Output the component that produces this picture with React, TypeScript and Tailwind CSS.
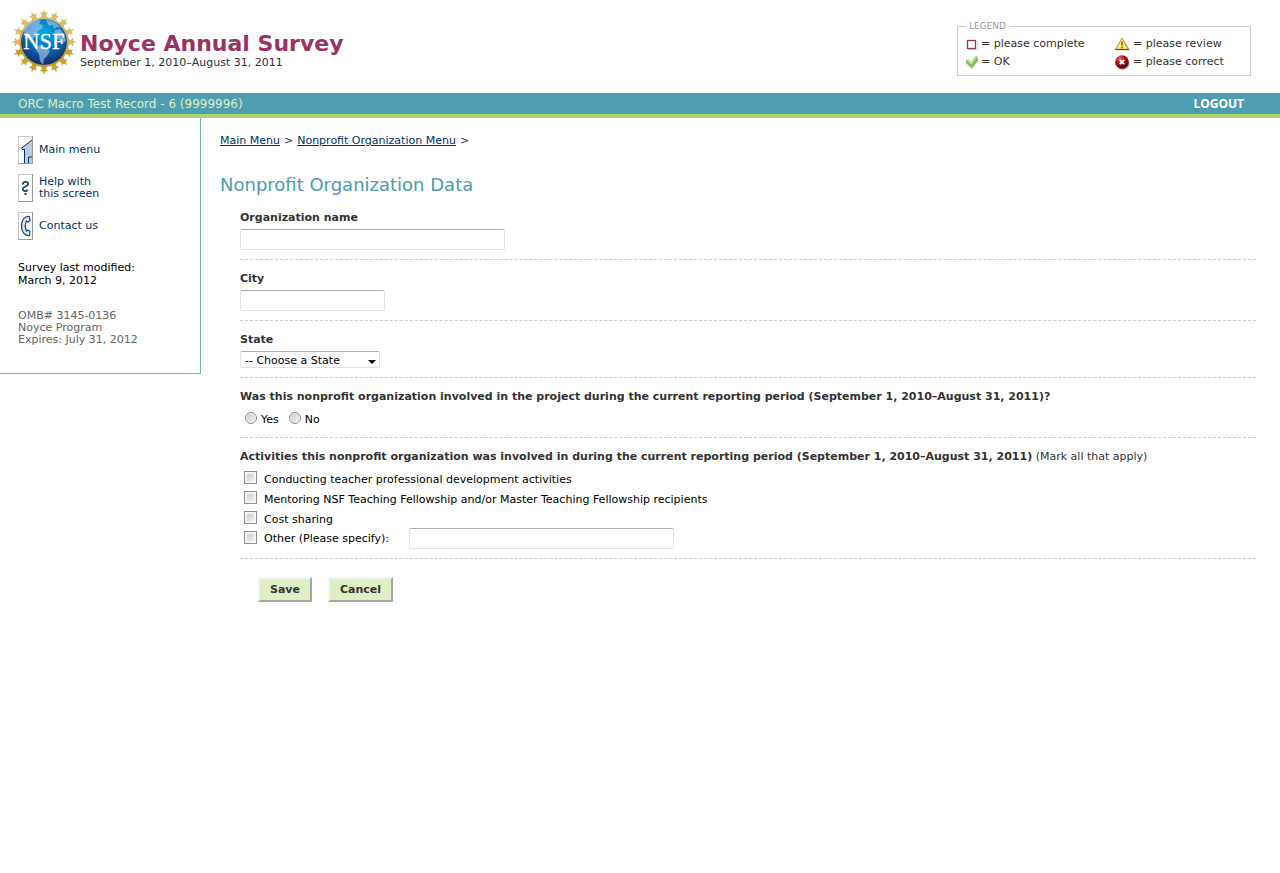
import type { ReactNode } from 'react';

const RAYS = Array.from({ length: 16 }, (_, i) => i * 22.5);

const ACTIVITIES = [
  'Conducting teacher professional development activities',
  'Mentoring NSF Teaching Fellowship and/or Master Teaching Fellowship recipients',
  'Cost sharing',
];

const STATES = ['California', 'Maryland', 'New York', 'Texas', 'Virginia'];

const boxClass =
  'size-[13px] shrink-0 appearance-none border border-[#8e8f8f] bg-linear-to-br from-[#c4c9d2] to-[#f6f6f6] shadow-[inset_0_0_0_2px_#f4f4f4] checked:from-[#4f9db0] checked:to-[#4f9db0]';
const radioClass =
  'size-3 shrink-0 appearance-none rounded-full border border-[#8e8f8f] bg-linear-to-br from-[#c4c9d2] to-[#f6f6f6] shadow-[inset_0_0_0_1px_#f4f4f4] checked:from-[#4f9db0] checked:to-[#4f9db0]';
const inputClass =
  'h-[21px] rounded-[2px] border border-[#e2e3ea] border-t-[#abadb3] bg-white px-1 text-[11px] text-black';
const buttonClass =
  'h-[25px] border-2 border-t-[#f4f4f4] border-l-[#f4f4f4] border-r-[#a5a5a5] border-b-[#a5a5a5] bg-[#dfefc5] px-2.5 pt-px text-[11px] font-bold';

function NsfLogo() {
  return (
    <svg viewBox="0 0 66 66" className="size-[66px] shrink-0" role="img" aria-label="NSF">
      <defs>
        <radialGradient id="globe" cx="50%" cy="30%" r="70%">
          <stop offset="0" stopColor="#00aeea" />
          <stop offset="0.5" stopColor="#0872bb" />
          <stop offset="1" stopColor="#142a63" />
        </radialGradient>
        <linearGradient id="gold" gradientUnits="userSpaceOnUse" x1="0" y1="0" x2="0" y2="66">
          <stop offset="0" stopColor="#dfc27a" />
          <stop offset="1" stopColor="#c19416" />
        </linearGradient>
      </defs>
      {RAYS.map((angle) => (
        <path
          key={angle}
          fill={angle > 90 && angle < 270 ? '#c9a02c' : '#dbbc6c'}
          transform={`rotate(${angle} 33 33)`}
          d="M33 0 34.1 3.6 37.2 3.8 35.2 6 35.8 8 39 10.5H27L30.2 8 30.8 6 28.8 3.8 31.9 3.6Z"
        />
      ))}
      <circle cx="33" cy="33" r="24" fill="none" stroke="url(#gold)" strokeWidth="1.5" />
      <circle cx="33" cy="33" r="23" fill="url(#globe)" />
      <g fill="#a9c5e8" opacity="0.65">
        <path d="M13 22c2-6 7-10 13-11l4 1-2 3 4 1-1 4-4 2-1 4-3 2-2 4-3-3-4 1z" />
        <path d="M35 11c6 0 11 3 15 8l-4-1-3 2-1-4-4 1z" />
        <path d="M26 37l5-1 5 3 3 3-3 5-3 3-1 6-3-4-1-7-3-4z" />
        <path d="M44 21l5-1 4 5 2 7-4 3-3-4-5-3z" />
      </g>
      <text
        x="33"
        y="40"
        textAnchor="middle"
        fontFamily="Liberation Serif, serif"
        fontSize="22.5"
        fill="#fff"
        stroke="#fff"
        strokeWidth="0.3"
      >
        NSF
      </text>
    </svg>
  );
}

function CompleteIcon() {
  return (
    <svg viewBox="0 0 12 14" className="h-[14px] w-3" aria-hidden="true">
      <path d="M2 12.5h9.5V4" fill="none" stroke="#ddd" />
      <rect x="1.5" y="3.5" width="8" height="8" fill="#fff" stroke="#993366" strokeWidth="1.3" />
    </svg>
  );
}

function OkIcon() {
  return (
    <svg viewBox="0 0 12 14" className="h-[14px] w-3" aria-hidden="true">
      <path d="M1 8 6 14 12 6V3L6 10 3 7z" fill="#b5b5b5" />
      <path d="M0 5 3 4.5 5 7 9.5 1 11.5 1.5V6L6 12.5 4 12 0 8z" fill="#86bd54" />
      <path d="M0 5 3 4.5 5 7 9.5 1 11 2 5.5 9.5z" fill="#c1e69c" />
    </svg>
  );
}

function ReviewIcon() {
  return (
    <svg viewBox="0 0 15 14" className="h-[14px] w-[15px]" aria-hidden="true">
      <path d="M2 13.5H15L8.5 2z" fill="#c4c4c4" />
      <path d="M7 1 .7 12.3H13.3z" fill="#fff06c" stroke="#dc8b3e" />
      <path d="M0 12.5h14" stroke="#c2201a" />
      <path d="M7 4.5v4M7 9.7v1.5" stroke="#443c14" strokeWidth="1.2" />
    </svg>
  );
}

function CorrectIcon() {
  return (
    <svg viewBox="0 0 15 15" className="size-[15px]" aria-hidden="true">
      <defs>
        <radialGradient id="ball" cx="35%" cy="25%" r="75%">
          <stop offset="0" stopColor="#e66a6a" />
          <stop offset="0.45" stopColor="#b80d12" />
          <stop offset="1" stopColor="#420608" />
        </radialGradient>
      </defs>
      <ellipse cx="8" cy="9" rx="6.5" ry="6" fill="#bbb" />
      <circle cx="7" cy="7" r="6.8" fill="url(#ball)" />
      <path d="M4.8 4.8 9.2 9.2M9.2 4.8 4.8 9.2" stroke="#fff" strokeWidth="1.9" />
    </svg>
  );
}

function NavIcon({ children }: { children: ReactNode }) {
  return (
    <svg viewBox="0 0 15 28" className="h-7 w-[15px] shrink-0" fill="none" aria-hidden="true">
      <path d="M.5 28V.5H15" stroke="#c8c8c8" />
      {children}
      <path d="M14.5 0V27.5H0" stroke="#999" />
    </svg>
  );
}

function LegendItem({ icon, children }: { icon: ReactNode; children: ReactNode }) {
  return (
    <li className="flex h-[18px] items-center gap-[3px]">
      {icon}
      <span>= {children}</span>
    </li>
  );
}

function NavLink({ icon, children }: { icon: ReactNode; children: ReactNode }) {
  return (
    <a href="#" className="flex items-center gap-1.5 text-[11px] leading-3 text-[#003366]">
      <NavIcon>{icon}</NavIcon>
      <span>{children}</span>
    </a>
  );
}

function Section({ children }: { children: ReactNode }) {
  return (
    <div className="flex flex-col items-start gap-[3px] border-b border-dashed border-[#ccc] pt-[11px] pb-[9px]">
      {children}
    </div>
  );
}

export default function App() {
  return (
    <div className="min-h-screen bg-white font-['Verdana','DejaVu_Sans',sans-serif] text-[11px] leading-4 text-[#333]">
      <header className="flex h-[93px] items-start justify-between pr-[29px] pl-[11px]">
        <div className="flex gap-[3px] pt-[9px]">
          <NsfLogo />
          <div className="pt-[22px]">
            <h1 className="text-[22px] leading-[26px] font-bold text-[#993366]">Noyce Annual Survey</h1>
            <p className="leading-3">September 1, 2010–August 31, 2011</p>
          </div>
        </div>
        <fieldset className="mt-[22px] h-[54px] w-[294px] border border-[#ccc] px-2">
          <legend className="px-[3px] text-[9px] leading-[9px] text-[#999]">LEGEND</legend>
          <ul className="grid grid-cols-[149px_1fr] pt-1">
            <LegendItem icon={<CompleteIcon />}>please complete</LegendItem>
            <LegendItem icon={<ReviewIcon />}>please review</LegendItem>
            <LegendItem icon={<OkIcon />}>OK</LegendItem>
            <LegendItem icon={<CorrectIcon />}>please correct</LegendItem>
          </ul>
        </fieldset>
      </header>

      <div className="flex h-[25px] items-center justify-between border-b-4 border-[#a9d56c] bg-[#4f9db0] pr-9 pl-[18px] text-[12px]">
        <span className="text-[#dfefc5]">ORC Macro Test Record - 6 (9999996)</span>
        <a href="#" className="font-['Open_Sans',sans-serif] font-bold text-white">
          LOGOUT
        </a>
      </div>

      <div className="flex items-start">
        <aside className="w-[201px] shrink-0 border-r border-b border-[#76b5b5] pt-[18px] pb-[27px] pl-[18px]">
          <nav className="flex flex-col gap-2.5">
            <NavLink
              icon={
                <>
                  <path d="M3 12 14 4V27H7V14L3 13z" fill="#bccada" />
                  <path d="M3 12.5 14 4M4 13.5h3M6.5 13v14M10.5 27v-6H14" stroke="#003366" />
                </>
              }
            >
              Main menu
            </NavLink>
            <NavLink
              icon={
                <>
                  <path
                    d="M4.8 10.5c0-3.5 5.4-3.5 5.4-.5 0 2.5-5.4 2.5-5.4 5 0 2.5 3.5 2.5 5 1"
                    stroke="#1f4878"
                    strokeWidth="1.8"
                  />
                  <path d="M7.5 19v2" stroke="#1f4878" strokeWidth="2" />
                </>
              }
            >
              Help with
              <br />
              this screen
            </NavLink>
            <NavLink
              icon={
                <path
                  d="M11.5 4.5C6 4 3.5 8 3.5 14s3 10 8 9.5l.5-4-2-1.5-1.5 1c-1.500-3-1.500-7 0-10l1.500 1 2-1.500z"
                  fill="#dbe4ee"
                  stroke="#1f4878"
                  strokeWidth="1.2"
                />
              }
            >
              Contact us
            </NavLink>
          </nav>
          <p className="mt-[21px] leading-[13px] text-black">
            Survey last modified:
            <br />
            March 9, 2012
          </p>
          <p className="mt-[23px] leading-3 text-[#666]">
            OMB# 3145-0136
            <br />
            Noyce Program
            <br />
            Expires: July 31, 2012
          </p>
        </aside>

        <main className="min-w-0 flex-1 pt-[15px] pr-6 pl-[19px]">
          <nav className="flex gap-1">
            <a href="#" className="text-[#003366] underline">
              Main Menu
            </a>
            <span>&gt;</span>
            <a href="#" className="text-[#003366] underline">
              Nonprofit Organization Menu
            </a>
            <span>&gt;</span>
          </nav>
          <h2 className="mt-6 text-[18px] leading-6 text-[#4f9db0]">Nonprofit Organization Data</h2>

          <form className="mt-0.5 ml-5" onSubmit={(e) => e.preventDefault()}>
            <Section>
              <label htmlFor="org" className="font-bold">
                Organization name
              </label>
              <input id="org" type="text" className={`${inputClass} w-[265px]`} />
            </Section>
            <Section>
              <label htmlFor="city" className="font-bold">
                City
              </label>
              <input id="city" type="text" className={`${inputClass} w-[145px]`} />
            </Section>
            <Section>
              <label htmlFor="state" className="font-bold">
                State
              </label>
              <div className="relative flex">
                <select
                  id="state"
                  className="h-[17px] w-[140px] appearance-none rounded-[2px] border border-[#e2e3ea] border-t-[#abadb3] bg-white pt-px pl-1 text-[11px] leading-[15px] text-black"
                >
                  <option>-- Choose a State</option>
                  {STATES.map((s) => (
                    <option key={s}>{s}</option>
                  ))}
                </select>
                <svg
                  viewBox="0 0 8 4"
                  className="pointer-events-none absolute top-[9px] right-1 h-1 w-2"
                  aria-hidden="true"
                >
                  <path d="M0 0h8L4 4z" />
                </svg>
              </div>
            </Section>
            <Section>
              <p id="involved" className="font-bold">
                Was this nonprofit organization involved in the project during the current reporting period
                (September 1, 2010–August 31, 2011)?
              </p>
              <div role="radiogroup" aria-labelledby="involved" className="flex h-5 gap-2.5 pl-[5px] text-black">
                <label className="flex gap-1 pt-1">
                  <input type="radio" name="involved" className={radioClass} />
                  <span>Yes</span>
                </label>
                <label className="flex gap-1 pt-1">
                  <input type="radio" name="involved" className={radioClass} />
                  <span>No</span>
                </label>
              </div>
            </Section>
            <Section>
              <p>
                <b>
                  Activities this nonprofit organization was involved in during the current reporting period
                  (September 1, 2010–August 31, 2011)
                </b>{' '}
                (Mark all that apply)
              </p>
              <div className="pl-1 text-black">
                {ACTIVITIES.map((activity) => (
                  <label key={activity} className="flex h-5 gap-[7px] pt-[3px]">
                    <input type="checkbox" className={boxClass} />
                    <span className="pt-px">{activity}</span>
                  </label>
                ))}
                <div className="flex gap-5">
                  <label className="flex gap-[7px] pt-[3px]">
                    <input type="checkbox" className={boxClass} />
                    <span>Other (Please specify):</span>
                  </label>
                  <input type="text" aria-label="Other activity" className={`${inputClass} w-[265px]`} />
                </div>
              </div>
            </Section>
            <div className="flex gap-4 py-[18px] pl-[18px]">
              <button type="submit" className={buttonClass}>
                Save
              </button>
              <button type="button" className={buttonClass}>
                Cancel
              </button>
            </div>
          </form>
        </main>
      </div>
    </div>
  );
}
